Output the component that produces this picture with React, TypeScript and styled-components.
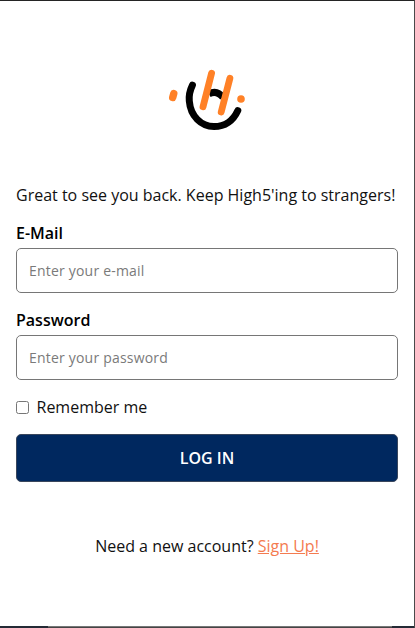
import React from "react";
import styled, { createGlobalStyle } from "styled-components";

const GlobalStyle = createGlobalStyle`
  *, *::before, *::after { box-sizing: border-box; }
  body {
    margin: 0;
    background: #fff;
    color: #111;
    font: 400 16px/24px "Open Sans", "Noto Sans", sans-serif;
  }
`;

const Screen = styled.main`
  height: 628px;
  display: flex;
  flex-direction: column;
  border-top: 1px solid #242424;
  border-right: 1px solid #4a4a4a;
  overflow: hidden;
`;

const Content = styled.div`
  flex: 1;
  display: flex;
  flex-direction: column;
  padding: 59px 16px 0;
`;

const Logo = styled.svg`
  display: block;
  width: 96px;
  height: 80px;
  margin: 0 auto 43px 144px;
`;

const Greeting = styled.p`
  margin: 0;
  white-space: nowrap;
`;

const Form = styled.form`
  display: flex;
  flex-direction: column;
  gap: 15px;
  margin-top: 14px;
`;

const Field = styled.label`
  display: flex;
  flex-direction: column;
  gap: 3px;
`;

const FieldName = styled.span`
  color: #000;
  font-weight: 600;
`;

const Input = styled.input`
  height: 45px;
  padding: 0 12px;
  border: 1px solid #767676;
  border-radius: 5px;
  background: #fff;
  font: 400 14px "Open Sans", "Noto Sans", sans-serif;
  letter-spacing: 0.2px;
  outline: none;

  &::placeholder { color: #7a7a7a; }
`;

const Remember = styled.label`
  display: flex;
  align-items: center;
  gap: 7.5px;
`;

const Checkbox = styled.input`
  width: 13px;
  height: 13px;
  margin: 0;
`;

const Submit = styled.button`
  height: 48px;
  padding: 0;
  border: 1px solid #39465c;
  border-radius: 5px;
  background: #00285f;
  color: #fff;
  font: 600 16px "Open Sans", "Noto Sans", sans-serif;
`;

const SignUp = styled.p`
  margin: 52px 0 0;
  text-align: center;
`;

const SignUpLink = styled.a`
  color: #f47b50;
  text-decoration: underline;
`;

const Footer = styled.div`
  height: 2px;
  display: grid;
  grid-template-columns: 48px 1fr 22px;
`;

const FooterEdge = styled.div`
  background: #242a35;
`;

const FooterBar = styled.div`
  background: #454545;
  border-top: 1px solid #777;
`;

export default function App() {
  return (
    <>
      <GlobalStyle />
      <Screen>
        <Content>
          <Logo viewBox="0 0 96 80" fill="none" strokeLinecap="round" aria-label="High5">
            <path d="M32.4 25.2 C29.6 31 28.8 36 29.3 41 C30.5 56 41 66.5 54 66.5 C64.5 66.5 73 61 77.8 50.6" stroke="#000" strokeWidth="7" />
            <path d="M49 33.8 C54 31.3 59 32.2 63 37.5" stroke="#000" strokeWidth="7" strokeLinecap="butt" />
            <path d="M51.6 13.2 L43 46.8 M69.9 18.3 L61.2 52" stroke="#ff8127" strokeWidth="6.8" />
            <path d="M13.8 33.5 L12.7 37.5" stroke="#ff8127" strokeWidth="7.4" />
            <circle cx="81" cy="39" r="3.8" fill="#ff8127" />
          </Logo>
          <Greeting>Great to see you back. Keep High5'ing to strangers!</Greeting>
          <Form onSubmit={(event) => event.preventDefault()}>
            <Field>
              <FieldName>E-Mail</FieldName>
              <Input type="email" placeholder="Enter your e-mail" />
            </Field>
            <Field>
              <FieldName>Password</FieldName>
              <Input type="password" placeholder="Enter your password" />
            </Field>
            <Remember>
              <Checkbox type="checkbox" />
              Remember me
            </Remember>
            <Submit type="submit">LOG IN</Submit>
          </Form>
          <SignUp>
            Need a new account? <SignUpLink href="#">Sign Up!</SignUpLink>
          </SignUp>
        </Content>
        <Footer>
          <FooterEdge />
          <FooterBar />
          <FooterEdge />
        </Footer>
      </Screen>
    </>
  );
}
